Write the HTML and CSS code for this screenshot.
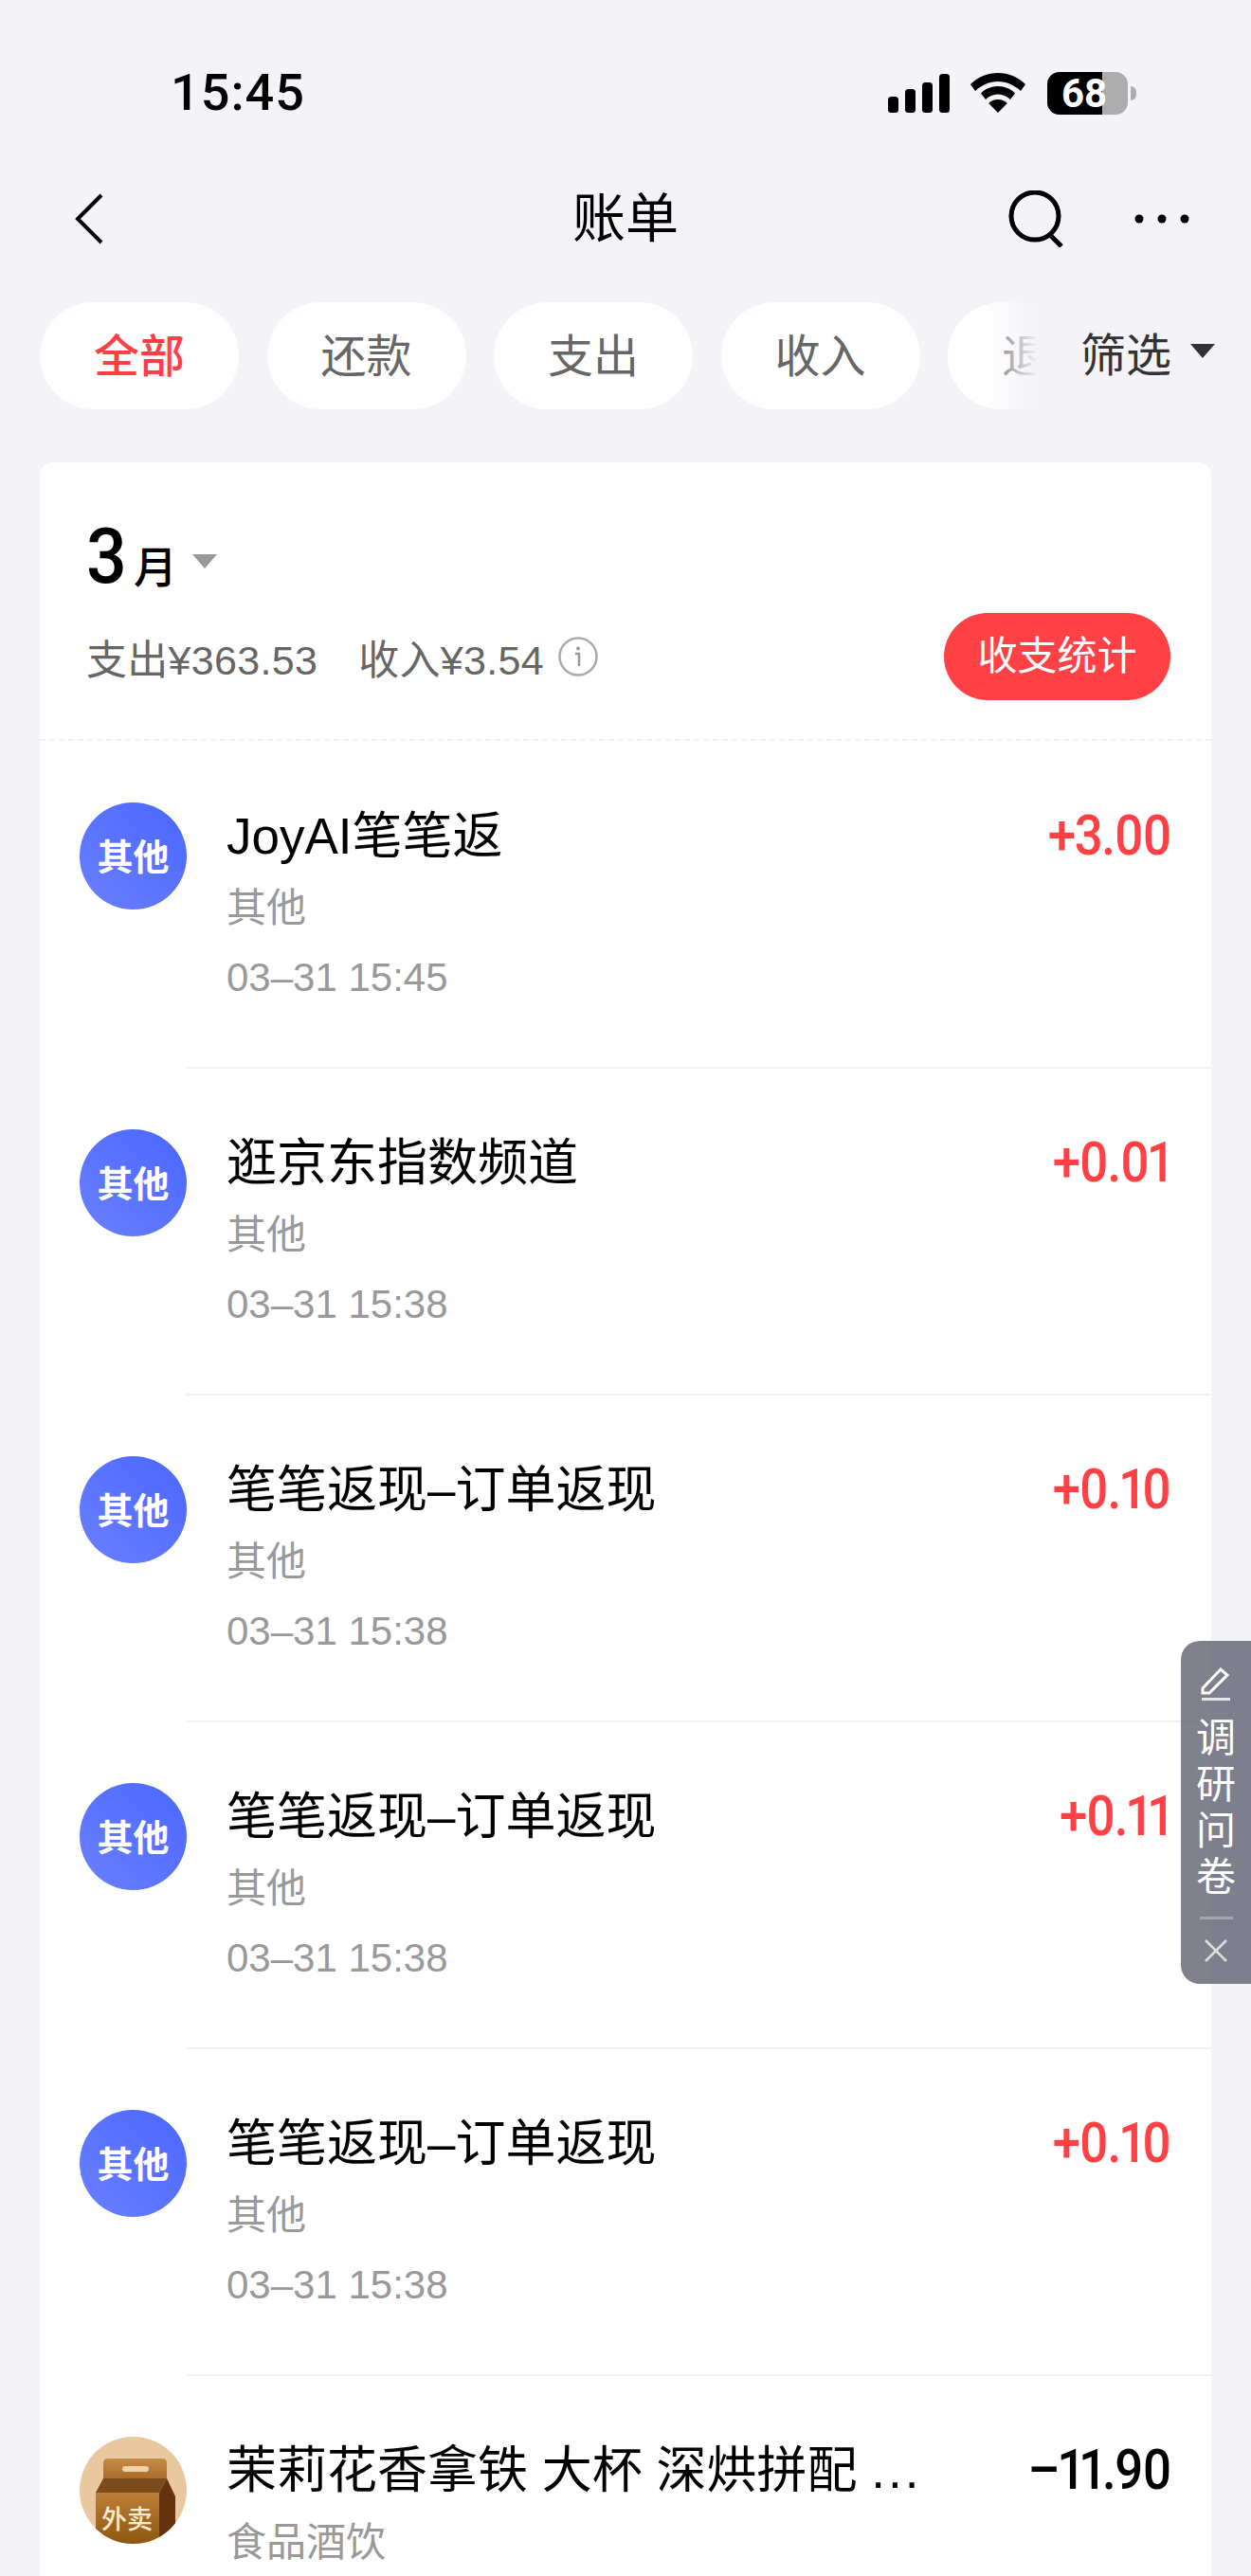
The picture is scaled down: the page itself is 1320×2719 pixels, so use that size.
FILE: index.html
```html
<!DOCTYPE html>
<html lang="zh-CN">
<head>
    <meta charset="UTF-8">
    <meta name="viewport" content="width=device-width, initial-scale=1.0">
    <title>账单</title>
    <link rel="stylesheet" href="styles.css">
</head>
<body>
    <div class="page">
        <div class="status-bar">
            <span class="time">15:45</span>
            <div class="status-icons">
                <svg class="signal" width="65" height="41" viewBox="0 0 65 41" fill="#000">
                    <rect x="0" y="24" width="11" height="17" rx="3.5"/>
                    <rect x="18" y="16" width="11" height="25" rx="3.5"/>
                    <rect x="36" y="9" width="11" height="32" rx="3.5"/>
                    <rect x="54" y="0" width="11" height="41" rx="3.5"/>
                </svg>
                <svg class="wifi" width="58" height="42" viewBox="0 0 58 42" fill="#000">
                    <path d="M29 0C18 0 8 4 0 12l5 7c6.500-6 15-10 24-10s17.500 4 24 10l5-7C50 4 40 0 29 0z"/>
                    <path d="M29 14c-7 0-13.500 2.800-18 7.500l5 6.500c3.300-3.400 8-5.500 13-5.500s9.700 2.100 13 5.500l5-6.500C42.500 16.800 36 14 29 14z"/>
                    <path d="M29 28c-3.800 0-7.300 1.500-9.800 4L29 42l9.800-10c-2.500-2.500-6-4-9.800-4z"/>
                </svg>
                <div class="battery">
                    <div class="battery-body">
                        <div class="battery-fill"></div>
                        <span class="battery-num">68</span>
                    </div>
                    <div class="battery-cap"></div>
                </div>
            </div>
        </div>

        <div class="nav">
            <svg class="back" width="30" height="54" viewBox="0 0 30 54" fill="none" stroke="#000" stroke-width="4">
                <path d="M28 2L3 27l25 25" />
            </svg>
            <h1 class="nav-title">账单</h1>
            <svg class="search" width="60" height="60" viewBox="0 0 60 60" fill="none" stroke="#000" stroke-width="5">
                <circle cx="28" cy="27" r="25"/>
                <path d="M44 47l12 12"/>
            </svg>
            <svg class="more" width="58" height="10" viewBox="0 0 58 10" fill="#000">
                <circle cx="5" cy="5" r="4.500"/>
                <circle cx="29" cy="5" r="4.500"/>
                <circle cx="53" cy="5" r="4.500"/>
            </svg>
        </div>

        <div class="filter-row">
            <div class="chips">
                <span class="chip chip-active">全部</span>
                <span class="chip">还款</span>
                <span class="chip">支出</span>
                <span class="chip">收入</span>
                <span class="chip">退款</span>
            </div>
            <div class="filter-btn">筛选<i class="arrow"></i></div>
        </div>

        <div class="card">
            <div class="summary">
                <div class="month"><span class="month-num">3</span><span class="month-unit">月</span><i class="month-arrow"></i></div>
                <div class="summary-line">
                    <span class="summary-text">支出¥363.53</span>
                    <span class="summary-text summary-income">收入¥3.54</span>
                    <svg class="info" width="42" height="42" viewBox="0 0 42 42" fill="none">
                        <circle cx="21" cy="21" r="19.500" stroke="#aaa" stroke-width="2.500"/>
                        <circle cx="21" cy="12.500" r="2" fill="#999"/>
                        <path d="M18 18h4v13" stroke="#999" stroke-width="2.500"/>
                    </svg>
                    <span class="stat-btn">收支统计</span>
                </div>
            </div>

            <div class="row">
                <div class="avatar">其他</div>
                <div class="row-main">
                    <div class="row-title">JoyAI笔笔返</div>
                    <div class="row-sub">其他</div>
                    <div class="row-date">03–31 15:45</div>
                </div>
                <div class="amount amount-plus">+3.00</div>
            </div>
            <div class="row">
                <div class="avatar">其他</div>
                <div class="row-main">
                    <div class="row-title">逛京东指数频道</div>
                    <div class="row-sub">其他</div>
                    <div class="row-date">03–31 15:38</div>
                </div>
                <div class="amount amount-plus">+0.01</div>
            </div>
            <div class="row">
                <div class="avatar">其他</div>
                <div class="row-main">
                    <div class="row-title">笔笔返现–订单返现</div>
                    <div class="row-sub">其他</div>
                    <div class="row-date">03–31 15:38</div>
                </div>
                <div class="amount amount-plus">+0.10</div>
            </div>
            <div class="row">
                <div class="avatar">其他</div>
                <div class="row-main">
                    <div class="row-title">笔笔返现–订单返现</div>
                    <div class="row-sub">其他</div>
                    <div class="row-date">03–31 15:38</div>
                </div>
                <div class="amount amount-plus">+0.11</div>
            </div>
            <div class="row">
                <div class="avatar">其他</div>
                <div class="row-main">
                    <div class="row-title">笔笔返现–订单返现</div>
                    <div class="row-sub">其他</div>
                    <div class="row-date">03–31 15:38</div>
                </div>
                <div class="amount amount-plus">+0.10</div>
            </div>
            <div class="row">
                <div class="avatar avatar-food">
                    <svg width="113" height="113" viewBox="0 0 113 113">
                        <defs>
                            <linearGradient id="bagTop" x1="0" y1="0" x2="0" y2="1">
                                <stop offset="0" stop-color="#c58c45"/>
                                <stop offset="1" stop-color="#a9692a"/>
                            </linearGradient>
                            <linearGradient id="bagFront" x1="0" y1="0" x2="0" y2="1">
                                <stop offset="0" stop-color="#bd7f37"/>
                                <stop offset="1" stop-color="#8e5710"/>
                            </linearGradient>
                        </defs>
                        <path d="M25 28q0-5 5-5h57q5 0 5 5v17H25z" fill="url(#bagTop)"/>
                        <rect x="45" y="31" width="28" height="6" rx="3" fill="#efd3a8"/>
                        <path d="M25 44h67l-8 15H17z" fill="#7d4b1d"/>
                        <path d="M17 59h67v54H17z" fill="url(#bagFront)"/>
                        <path d="M92 44l9 19v50H84V59z" fill="#65340f"/>
                    </svg>
                    <span class="food-label">外卖</span>
                </div>
                <div class="row-main">
                    <div class="row-title row-title-cut">茉莉花香拿铁 大杯 深烘拼配 <span class="dots">...</span></div>
                    <div class="row-sub">食品酒饮</div>
                </div>
                <div class="amount">–11.90</div>
            </div>
        </div>

        <div class="survey">
            <svg class="survey-pen" width="32" height="36" viewBox="0 0 32 36" fill="none" stroke="#fff" stroke-width="3">
                <path d="M2 23L21 3l7 6L9 28H2z"/>
                <path d="M1 34.500h30" stroke-opacity=".8"/>
            </svg>
            <div class="survey-text">调<br>研<br>问<br>卷</div>
            <div class="survey-line"></div>
            <svg class="survey-close" width="26" height="26" viewBox="0 0 26 26" stroke="#ddd" stroke-width="2.500">
                <path d="M2 2l22 22M24 2L2 24"/>
            </svg>
        </div>
    </div>
</body>
</html>
```

FILE: styles.css
```css
* {
    box-sizing: border-box;
}
body {
    margin: 0;
    background-color: #f3f3f8;
    font-family: "Liberation Sans", "Noto Sans CJK SC", sans-serif;
    color: #000;
}
.page {
    position: relative;
    height: 2719px;
    overflow: hidden;
}

/* status bar */
.status-bar {
    display: flex;
    align-items: center;
    height: 74px;
    margin-top: 61px;
    padding-left: 180px;
}
.time {
    font-family: Roboto, sans-serif;
    font-weight: 500;
    font-size: 54px;
    line-height: 74px;
    letter-spacing: 1px;
}
.status-icons {
    display: flex;
    align-items: center;
    margin-left: auto;
    padding-right: 121px;
}
.signal {
    margin-right: 22px;
}
.wifi {
    margin-right: 23px;
}
.battery {
    display: flex;
    align-items: center;
}
.battery-body {
    position: relative;
    width: 85px;
    height: 45px;
    border-radius: 13px;
    background-color: #adadad;
}
.battery-fill {
    width: 58px;
    height: 100%;
    border-radius: 13px 0 0 13px;
    background-color: #000;
}
.battery-num {
    position: absolute;
    left: 15px;
    top: 0;
    font-family: Roboto, sans-serif;
    font-weight: 700;
    font-size: 42px;
    line-height: 45px;
    color: #fff;
}
.battery-cap {
    width: 6px;
    height: 15px;
    margin-left: 3px;
    border-radius: 0 6px 6px 0;
    background-color: #adadad;
}

/* nav */
.nav {
    position: relative;
    display: flex;
    align-items: center;
    height: 80px;
    margin-top: 56px;
    padding-left: 79px;
    padding-right: 65px;
}
.nav-title {
    margin: 0;
    position: absolute;
    left: 0;
    right: 0;
    text-align: center;
    font-size: 56px;
    font-weight: 400;
    line-height: 80px;
}
.search {
    margin-left: auto;
    margin-right: 73px;
}

/* filter chips */
.filter-row {
    display: flex;
    align-items: center;
    margin-top: 48px;
    padding-left: 42px;
}
.chips {
    position: relative;
    display: flex;
    flex: none;
    gap: 29.500px;
    width: 1060px;
    overflow: hidden;
}
.chips::after {
    content: "";
    position: absolute;
    top: 0;
    bottom: 0;
    right: 0;
    width: 66px;
    background: linear-gradient(to right, rgba(243, 243, 248, 0), #f3f3f8 90%);
}
.chip {
    flex: none;
    width: 210px;
    height: 113px;
    border-radius: 57px;
    background-color: #fff;
    text-align: center;
    font-size: 48px;
    line-height: 115px;
    color: #666;
}
.chip-active {
    color: #ff3f45;
    font-weight: 500;
}
.filter-btn {
    display: flex;
    align-items: center;
    height: 113px;
    margin-left: 38px;
    font-size: 48px;
    line-height: 115px;
    color: #333;
}
.arrow {
    width: 0;
    height: 0;
    margin-left: 20px;
    margin-top: -10px;
    border-left: 13px solid transparent;
    border-right: 13px solid transparent;
    border-top: 15px solid #333;
}

/* card */
.card {
    margin: 56px 42px 0;
    border-radius: 14px 14px 0 0;
    background-color: #fff;
}
.summary {
    height: 294px;
    padding: 65px 43px 0 49px;
    border-bottom: 2px dashed #f1f1f4;
}
.month {
    display: flex;
    align-items: baseline;
    height: 70px;
}
.month-num {
    font-family: Roboto, sans-serif;
    font-weight: 500;
    font-size: 81px;
    line-height: 70px;
    transform: scaleX(0.93);
    transform-origin: left;
}
.month-unit {
    margin-left: 4px;
    font-size: 46px;
    font-weight: 500;
}
.month-arrow {
    align-self: center;
    width: 0;
    height: 0;
    margin-left: 16px;
    margin-top: 8px;
    border-left: 13px solid transparent;
    border-right: 13px solid transparent;
    border-top: 15px solid #999;
}
.summary-line {
    display: flex;
    align-items: center;
    height: 92px;
    margin-top: 24px;
}
.summary-text {
    font-size: 43px;
    letter-spacing: 0.3px;
    color: #666;
}
.summary-income {
    margin-left: 43px;
}
.info {
    margin-left: 15px;
}
.stat-btn {
    margin-left: auto;
    width: 239px;
    height: 92px;
    border-radius: 46px;
    background-color: #ff4146;
    text-align: center;
    font-size: 42px;
    line-height: 92px;
    color: #fff;
}

/* bill rows */
.row {
    position: relative;
    display: flex;
    height: 345px;
    padding: 65px 43px 0 42px;
}
.row::after {
    content: "";
    position: absolute;
    left: 155px;
    right: 0;
    bottom: -1px;
    height: 2px;
    background-color: #f1f1f3;
}
.avatar {
    position: relative;
    flex: none;
    width: 113px;
    height: 113px;
    border-radius: 50%;
    background: linear-gradient(45deg, #6a80ff, #4a66ff);
    text-align: center;
    font-size: 38px;
    font-weight: 700;
    line-height: 116px;
    color: #fff;
    overflow: hidden;
}
.avatar-food {
    background: #e9c8a0;
}
.avatar-food svg {
    display: block;
}
.food-label {
    position: absolute;
    left: 23px;
    top: 68px;
    font-size: 27px;
    font-weight: 500;
    line-height: 40px;
    color: #fbebd0;
}
.row-main {
    flex: 1;
    min-width: 0;
    padding-left: 42px;
}
.row-title {
    height: 70px;
    font-size: 53px;
    line-height: 72px;
}
.row-title-cut {
    white-space: nowrap;
}
.dots {
    letter-spacing: 3px;
}
.row-sub {
    margin-top: 7px;
    height: 70px;
    font-size: 42px;
    line-height: 70px;
    color: #999;
}
.row-date {
    margin-top: 3px;
    font-size: 42px;
    line-height: 70px;
    color: #999;
}
.amount {
    flex: none;
    font-family: Roboto, sans-serif;
    font-weight: 500;
    font-size: 60px;
    line-height: 70px;
    letter-spacing: -1.500px;
    font-variant-numeric: proportional-nums;
    transform: scaleX(0.88);
    transform-origin: right;
}
.amount-plus {
    color: #ff4146;
}

/* survey tab floating over the list */
.survey {
    position: absolute;
    right: 0;
    top: 1732px;
    display: flex;
    flex-direction: column;
    align-items: center;
    width: 74px;
    height: 362px;
    padding-top: 27px;
    border-radius: 20px 0 0 20px;
    background-color: rgba(96, 97, 112, 0.8);
}
.survey-pen {
    flex: none;
}
.survey-text {
    margin-top: 15px;
    font-size: 42px;
    line-height: 49px;
    color: #fff;
}
.survey-line {
    width: 35px;
    height: 3px;
    margin-top: 17px;
    background-color: #a4a5af;
}
.survey-close {
    margin-top: 20px;
}
```
